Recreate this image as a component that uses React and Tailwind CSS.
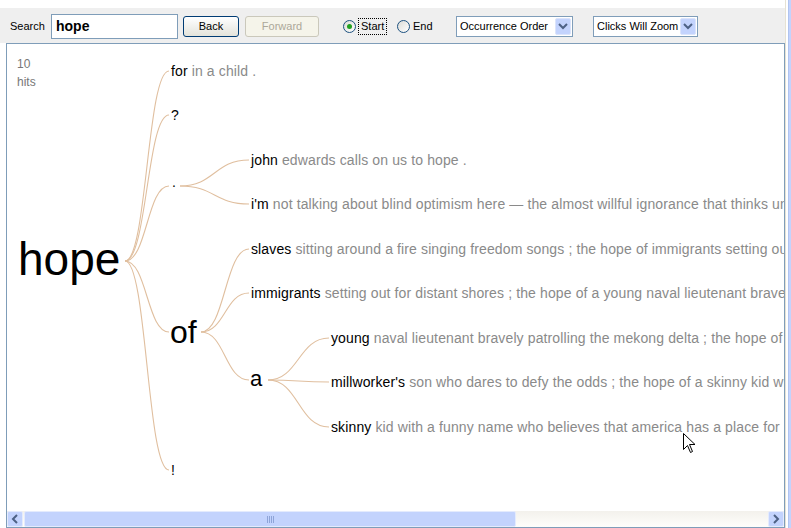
import React from 'react';

const ui = { fontFamily: '"Liberation Sans", Arial, sans-serif' };

const nodes = [
  { x: 18, y: 236, size: 46, word: 'hope' },
  { x: 171, y: 64, size: 14, word: 'for', rest: 'in a child .' },
  { x: 171, y: 108, size: 14, word: '?' },
  { x: 172, y: 175, size: 14, word: '.' },
  { x: 170, y: 316, size: 32, word: 'of' },
  { x: 171, y: 463, size: 14, word: '!' },
  { x: 251, y: 153, size: 14, word: 'john', rest: 'edwards calls on us to hope .' },
  {
    x: 251, y: 197, size: 14, word: "i'm",
    rest: 'not talking about blind optimism here — the almost willful ignorance that thinks unemployment will go away',
  },
  {
    x: 251, y: 242, size: 14, word: 'slaves',
    rest: 'sitting around a fire singing freedom songs ; the hope of immigrants setting out for distant shores ;',
  },
  {
    x: 251, y: 286, size: 14, word: 'immigrants',
    rest: 'setting out for distant shores ; the hope of a young naval lieutenant bravely patrolling the mekong delta ;',
  },
  { x: 250, y: 368, size: 22, word: 'a' },
  {
    x: 331, y: 331, size: 14, word: 'young',
    rest: "naval lieutenant bravely patrolling the mekong delta ; the hope of a millworker's son",
  },
  {
    x: 331, y: 375, size: 14, word: "millworker's",
    rest: 'son who dares to defy the odds ; the hope of a skinny kid with a funny name',
  },
  {
    x: 331, y: 420, size: 14, word: 'skinny',
    rest: 'kid with a funny name who believes that america has a place for him , too .',
  },
];

const links = [
  [125, 261, 169, 71],
  [125, 261, 169, 115],
  [125, 261, 169, 186],
  [125, 261, 169, 332],
  [125, 261, 169, 470],
  [180, 186, 249, 160],
  [180, 186, 249, 204],
  [201, 332, 249, 249],
  [201, 332, 249, 293],
  [201, 332, 249, 380],
  [268, 380, 329, 338],
  [268, 380, 329, 382],
  [268, 380, 329, 427],
];

function curve([x0, y0, x1, y1]) {
  const m = (x0 + x1) / 2;
  return `M${x0},${y0} C${m},${y0} ${m},${y1} ${x1},${y1}`;
}

function Radio({ checked }) {
  return (
    <span className="relative w-[13px] h-[13px] rounded-full border border-[#1c5180] bg-gradient-to-br from-[#dcdcd7] to-white flex items-center justify-center shrink-0">
      {checked && <span className="w-[5px] h-[5px] rounded-full bg-[#21a121]" />}
    </span>
  );
}

function Chevron({ dir }) {
  const d = dir === 'down' ? 'M3,5 L7,9 L11,5' : dir === 'left' ? 'M9,3 L5,7 L9,11' : 'M5,3 L9,7 L5,11';
  return (
    <svg width="14" height="14" viewBox="0 0 14 14">
      <path d={d} fill="none" stroke="#4d6185" strokeWidth="2" />
    </svg>
  );
}

function Select({ label, width }) {
  return (
    <div className={`flex items-center h-[21px] border border-[#7f9db9] bg-white pl-[3px] pr-[1px] ${width}`}>
      <span className="flex-1 text-[11px] text-black">{label}</span>
      <span className="w-[16px] h-[17px] rounded-[2px] bg-[#c3d3fd] border border-[#dbe4fb] flex items-center justify-center">
        <Chevron dir="down" />
      </span>
    </div>
  );
}

function Toolbar() {
  return (
    <div className="h-[35px] bg-[#efefef] flex items-center pl-[10px] pt-[1px] text-[11px]" style={ui}>
      <span className="w-[41px] text-black">Search</span>
      <div className="w-[127px] h-[25px] border border-[#7f9db9] bg-white flex items-center pl-[4px] text-[14px] font-bold text-black">
        hope
      </div>
      <button className="ml-[5px] w-[56px] h-[21px] rounded-[3px] border border-[#003c74] bg-gradient-to-b from-white to-[#e3e3db] text-[11px] text-black">
        Back
      </button>
      <button className="ml-[6px] w-[74px] h-[21px] rounded-[3px] border border-[#cac8bb] bg-[#f5f4ea] text-[11px] text-[#aca899]">
        Forward
      </button>
      <div className="ml-[24px] w-[54px] flex items-center">
        <Radio checked />
        <span className="ml-[2px] px-[2px] py-[2px] border border-dotted border-black leading-none text-black">Start</span>
      </div>
      <div className="w-[59px] flex items-center">
        <Radio />
        <span className="ml-[3px] text-black">End</span>
      </div>
      <Select label="Occurrence Order" width="w-[117px]" />
      <div className="ml-[20px]">
        <Select label="Clicks Will Zoom" width="w-[105px]" />
      </div>
    </div>
  );
}

function Tree() {
  return (
    <div className="relative h-[467px] overflow-hidden bg-white" style={ui}>
      <div className="absolute left-[10px] top-[11px] text-[12px] leading-[18px] text-[#777]">
        <div>10</div>
        <div>hits</div>
      </div>
      <svg className="absolute left-0 top-0" width="777" height="467" viewBox="7 44 777 467">
        {links.map((l, i) => (
          <path key={i} d={curve(l)} fill="none" stroke="#e0bf9f" strokeWidth="1.1" />
        ))}
      </svg>
      {nodes.map((n) => (
        <div
          key={n.word}
          className={`absolute whitespace-nowrap leading-none ${n.size === 14 ? 'tracking-[0.12px]' : ''}`}
          style={{ left: n.x - 7, top: n.y - 44, fontSize: n.size }}
        >
          <span className="text-black">{n.word}</span>
          {n.rest && <span className="text-[#8a8a8a]"> {n.rest}</span>}
        </div>
      ))}
      <svg className="absolute left-[676px] top-[389px]" width="13" height="21" viewBox="0 0 13 21">
        <path d="M0.5,0.5 L0.5,16.5 L4.5,12.5 L7.5,19.5 L9.5,18.5 L6.5,11.5 L12,11.5 Z" fill="white" stroke="black" strokeWidth="1" />
      </svg>
    </div>
  );
}

function Scrollbar() {
  return (
    <div className="h-[16px] flex bg-gradient-to-b from-[#f3f1ec] to-[#fefefb]">
      <div className="w-[16px] h-[16px] rounded-[2px] bg-[#c3d3fd] border border-[#e4ebfd] flex items-center justify-center">
        <Chevron dir="left" />
      </div>
      <div className="ml-[1px] w-[492px] h-[16px] rounded-[2px] bg-[#c3d3fd] border border-[#e4ebfd] flex items-center justify-center">
        <div className="flex gap-[1px]">
          <span className="w-[1px] h-[7px] bg-[#8ea4d8]" />
          <span className="w-[1px] h-[7px] bg-[#8ea4d8]" />
          <span className="w-[1px] h-[7px] bg-[#8ea4d8]" />
          <span className="w-[1px] h-[7px] bg-[#8ea4d8]" />
        </div>
      </div>
      <div className="flex-1" />
      <div className="w-[16px] h-[16px] rounded-[2px] bg-[#c3d3fd] border border-[#e4ebfd] flex items-center justify-center">
        <Chevron dir="right" />
      </div>
    </div>
  );
}

export default function App() {
  return (
    <div className="w-[791px] h-[528px] flex bg-white overflow-hidden">
      <div className="w-[785px] flex flex-col">
        <div className="h-[8px] bg-white" />
        <Toolbar />
        <div className="ml-[6px] w-[779px] h-[485px] border border-[#7f9db9] flex flex-col">
          <Tree />
          <Scrollbar />
        </div>
      </div>
      <div className="w-[6px] flex border-l border-[#e6e2d4]">
        <div className="w-[2px] bg-white" />
        <div className="flex-1 bg-[#c3d3fd] border-l border-[#b0c4f0]" />
      </div>
    </div>
  );
}
